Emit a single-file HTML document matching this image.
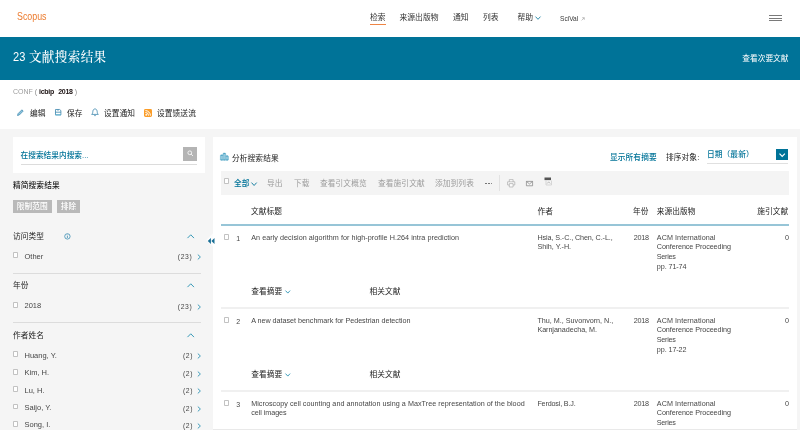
<!DOCTYPE html>
<html lang="zh-CN">
<head>
<meta charset="utf-8">
<title>Scopus - 文献搜索结果</title>
<style>
*{box-sizing:border-box;margin:0;padding:0}
html,body{width:800px;height:430px;overflow:hidden;background:#f5f5f5}
body{will-change:transform;position:relative;font-family:"Liberation Sans","Noto Sans CJK SC",sans-serif;font-size:7.2px;color:#464646;line-height:9.7px}
.a{position:absolute;white-space:nowrap}
.c{font-size:7.7px;line-height:10px;color:#1c1c1c;letter-spacing:0.1px}
.c.b{font-weight:500}
.b{color:#007398}
.g{color:#9c9c9c}
.w{color:#fff}
.cb{position:absolute;width:4.8px;height:5.7px;border:0.65px solid #c2c2c2;background:#fff;border-radius:0.9px}
.hr{position:absolute;height:1px;background:#dcdcdc}
.box{position:absolute}
svg{position:absolute;overflow:visible}
</style>
</head>
<body>
<div class="box" style="left:0px;top:0px;width:800px;height:37px;background:#fff;"></div>
<div class="a " style="left:17px;top:10.9px;color:#ec7a2c;font-size:10.1px;line-height:12px;transform:scaleX(0.875);transform-origin:0 50%">Scopus</div>
<div class="a " style="left:370px;top:13px;font-size:7.8px;line-height:10px;color:#323232">检索</div>
<div class="box" style="left:370px;top:23.6px;width:15.5px;height:1px;background:#ee8545;"></div>
<div class="a " style="left:399.5px;top:13px;font-size:7.8px;line-height:10px;color:#323232">来源出版物</div>
<div class="a " style="left:453px;top:13px;font-size:7.8px;line-height:10px;color:#323232">通知</div>
<div class="a " style="left:483px;top:13px;font-size:7.8px;line-height:10px;color:#323232">列表</div>
<div class="a " style="left:517.5px;top:13px;font-size:7.8px;line-height:10px;color:#323232">帮助</div>
<svg style="left:535px;top:16.4px" width="6" height="4" viewBox="0 0 6 4"><path d="M0.5 0.6 L3.0 3.3 L5.5 0.6" fill="none" stroke="#007398" stroke-width="0.8"/></svg>
<div class="a " style="left:560px;top:13.5px;font-size:6.6px;line-height:9px;color:#3a3a3a">SciVal</div>
<svg style="left:581px;top:16.5px" width="4" height="4" viewBox="0 0 4 4"><path d="M0.6 3.4 L3.2 0.8 M1.2 0.7 H3.3 V2.8" fill="none" stroke="#9a9a9a" stroke-width="0.6"/></svg>
<div class="box" style="left:769px;top:15.3px;width:13px;height:1px;background:#7a7a7a;"></div>
<div class="box" style="left:769px;top:17.8px;width:13px;height:1px;background:#7a7a7a;"></div>
<div class="box" style="left:769px;top:20.3px;width:13px;height:1px;background:#7a7a7a;"></div>
<div class="box" style="left:0px;top:37px;width:800px;height:43px;background:#007398;"></div>
<div class="a w" style="left:13px;top:49px;font-size:12.6px;line-height:16px;font-family:'Liberation Sans','Noto Serif CJK SC',serif"><span style="display:inline-block;font-size:13px;line-height:16px;transform:scaleX(0.85);transform-origin:0 50%;width:12.3px;vertical-align:top">23</span><span style="display:inline-block;width:3.6px"></span><span style="letter-spacing:0.35px;font-weight:500">文献搜索结果</span></div>
<div class="a w" style="right:11.5px;top:54px;font-size:7.7px;line-height:10px">查看次要文献</div>
<div class="box" style="left:0px;top:80px;width:800px;height:49.3px;background:#fff;"></div>
<div class="a " style="left:13px;top:86.7px;font-size:7px;line-height:10px"><span class="g">CONF</span> <span class="g" style="color:#8a8a8a">(</span> <span style="color:#1a1010;font-weight:bold;letter-spacing:-0.28px">icbip<span style="display:inline-block;width:4.2px"></span>2018</span> <span style="color:#8a8a8a">)</span></div>
<svg style="left:17.3px;top:109.2px" width="7" height="7" viewBox="0 0 7 7"><path d="M0.5 6.5 L1 4.7 L4.9 0.8 L6.2 2.1 L2.3 6 Z" fill="#8cc3dc" stroke="#3a85ac" stroke-width="0.7" stroke-linejoin="round"/></svg>
<div class="a c" style="left:30px;top:108.8px;">编辑</div>
<svg style="left:54.9px;top:109.3px" width="6.4" height="6.4" viewBox="0 0 6.4 6.4"><path d="M0.5 0.5 H4.6 L5.9 1.6 V5.9 H0.5 Z M0.5 3.2 H5.9 M3 0.5 V1.8" fill="#fff" stroke="#3a85ac" stroke-width="0.8"/><path d="M0.5 5.9 H5.9" stroke="#5bb5d5" stroke-width="0.9"/></svg>
<div class="a c" style="left:67px;top:108.8px;">保存</div>
<svg style="left:91px;top:108.3px" width="8" height="9" viewBox="0 0 8 9"><path d="M0.7 6.4 C1.9 5.4 1.7 4 1.9 3 C2.2 1.5 3.2 0.9 4 0.9 C4.8 0.9 5.8 1.5 6.1 3 C6.3 4 6.1 5.4 7.3 6.4 Z M3.2 7.6 H4.8" fill="none" stroke="#3a85ac" stroke-width="0.8"/></svg>
<div class="a c" style="left:104px;top:108.8px;">设置通知</div>
<svg style="left:144px;top:108.8px" width="8" height="8" viewBox="0 0 8 8"><rect x="0" y="0" width="8" height="8" rx="1.4" fill="#fb9d28"/><circle cx="2.2" cy="5.8" r="0.9" fill="#fff"/><path d="M1.4 3.5 A3.1 3.1 0 0 1 4.5 6.6 M1.4 1.6 A5 5 0 0 1 6.4 6.6" fill="none" stroke="#fff" stroke-width="1"/></svg>
<div class="a c" style="left:157px;top:108.8px;">设置馈送流</div>
<div class="box" style="left:13px;top:137px;width:192.3px;height:35.6px;background:#fff;"></div>
<div class="a b" style="left:20.5px;top:151.2px;font-size:7.7px;line-height:10px;font-weight:500">在搜索结果内搜索...</div>
<div class="box" style="left:183px;top:147px;width:14.1px;height:14.3px;background:#b4b4b4;"></div>
<svg style="left:186.5px;top:150.1px" width="7.2" height="7.2" viewBox="0 0 8 8"><circle cx="3.1" cy="3.1" r="2.1" fill="none" stroke="#fff" stroke-width="0.9"/><path d="M4.7 4.7 L6.6 6.6" stroke="#fff" stroke-width="1"/></svg>
<div class="box" style="left:20.5px;top:164px;width:176.6px;height:1px;background:#dcdcdc;"></div>
<div class="a c" style="left:13px;top:181px;font-weight:500">精简搜索结果</div>
<div class="a " style="left:13px;top:199.6px;background:#b9b9b9;color:#fff;height:13.2px;line-height:13.2px;text-align:center;font-size:7.7px;font-weight:500;letter-spacing:0.05px;width:38.7px">限制范围</div>
<div class="a " style="left:57px;top:199.6px;background:#b9b9b9;color:#fff;height:13.2px;line-height:13.2px;text-align:center;font-size:7.7px;font-weight:500;letter-spacing:0.05px;width:23px">排除</div>
<div class="a c" style="left:13px;top:231.5px;">访问类型</div>
<svg style="left:187.2px;top:233.7px" width="7.5" height="4.6" viewBox="0 0 7.5 4.6"><path d="M0.5 4.1 L3.75 0.8 L7.0 4.1" fill="none" stroke="#2b93b3" stroke-width="0.95"/></svg>
<svg style="left:63.7px;top:233px" width="7" height="7" viewBox="0 0 7 7"><circle cx="3.4" cy="3.4" r="2.7" fill="none" stroke="#3a8db3" stroke-width="0.8"/><path d="M3.4 2.9 V5 M3.4 1.7 V2.3" stroke="#3a8db3" stroke-width="0.8"/></svg>
<div class="cb" style="left:13.2px;top:252.3px"></div>
<div class="a " style="left:24.5px;top:251.5px;font-size:7.5px;line-height:10px">Other</div>
<div class="a " style="right:607.3px;top:252.3px;font-size:8.1px;line-height:10px;letter-spacing:0.75px;transform:scaleX(0.84);transform-origin:100% 50%">(23)</div>
<svg style="left:197px;top:254.2px" width="4.5" height="6" viewBox="0 0 4.5 6"><path d="M0.8 0.6 L3.4 3 L0.8 5.4" fill="none" stroke="#2b93b3" stroke-width="0.9"/></svg>
<div class="box" style="left:13px;top:272.8px;width:188px;height:1px;background:#dcdcdc;"></div>
<div class="a c" style="left:13px;top:280.7px;">年份</div>
<svg style="left:187.2px;top:282.9px" width="7.5" height="4.6" viewBox="0 0 7.5 4.6"><path d="M0.5 4.1 L3.75 0.8 L7.0 4.1" fill="none" stroke="#2b93b3" stroke-width="0.95"/></svg>
<div class="cb" style="left:13.2px;top:302.1px"></div>
<div class="a " style="left:24.5px;top:301.3px;font-size:7.5px;line-height:10px">2018</div>
<div class="a " style="right:607.3px;top:302.1px;font-size:8.1px;line-height:10px;letter-spacing:0.75px;transform:scaleX(0.84);transform-origin:100% 50%">(23)</div>
<svg style="left:197px;top:304.0px" width="4.5" height="6" viewBox="0 0 4.5 6"><path d="M0.8 0.6 L3.4 3 L0.8 5.4" fill="none" stroke="#2b93b3" stroke-width="0.9"/></svg>
<div class="box" style="left:13px;top:321.8px;width:188px;height:1px;background:#dcdcdc;"></div>
<div class="a c" style="left:13px;top:331px;">作者姓名</div>
<svg style="left:187.2px;top:333.2px" width="7.5" height="4.6" viewBox="0 0 7.5 4.6"><path d="M0.5 4.1 L3.75 0.8 L7.0 4.1" fill="none" stroke="#2b93b3" stroke-width="0.95"/></svg>
<div class="cb" style="left:13.2px;top:351.40000000000003px"></div>
<div class="a " style="left:24.5px;top:350.6px;font-size:7.5px;line-height:10px">Huang, Y.</div>
<div class="a " style="right:607.3px;top:351.40000000000003px;font-size:8.1px;line-height:10px;letter-spacing:0.75px;transform:scaleX(0.84);transform-origin:100% 50%">(2)</div>
<svg style="left:197px;top:353.3px" width="4.5" height="6" viewBox="0 0 4.5 6"><path d="M0.8 0.6 L3.4 3 L0.8 5.4" fill="none" stroke="#2b93b3" stroke-width="0.9"/></svg>
<div class="cb" style="left:13.2px;top:368.85px"></div>
<div class="a " style="left:24.5px;top:368.05px;font-size:7.5px;line-height:10px">Kim, H.</div>
<div class="a " style="right:607.3px;top:368.85px;font-size:8.1px;line-height:10px;letter-spacing:0.75px;transform:scaleX(0.84);transform-origin:100% 50%">(2)</div>
<svg style="left:197px;top:370.75px" width="4.5" height="6" viewBox="0 0 4.5 6"><path d="M0.8 0.6 L3.4 3 L0.8 5.4" fill="none" stroke="#2b93b3" stroke-width="0.9"/></svg>
<div class="cb" style="left:13.2px;top:386.3px"></div>
<div class="a " style="left:24.5px;top:385.5px;font-size:7.5px;line-height:10px">Lu, H.</div>
<div class="a " style="right:607.3px;top:386.3px;font-size:8.1px;line-height:10px;letter-spacing:0.75px;transform:scaleX(0.84);transform-origin:100% 50%">(2)</div>
<svg style="left:197px;top:388.2px" width="4.5" height="6" viewBox="0 0 4.5 6"><path d="M0.8 0.6 L3.4 3 L0.8 5.4" fill="none" stroke="#2b93b3" stroke-width="0.9"/></svg>
<div class="cb" style="left:13.2px;top:403.75000000000006px"></div>
<div class="a " style="left:24.5px;top:402.95000000000005px;font-size:7.5px;line-height:10px">Saijo, Y.</div>
<div class="a " style="right:607.3px;top:403.75000000000006px;font-size:8.1px;line-height:10px;letter-spacing:0.75px;transform:scaleX(0.84);transform-origin:100% 50%">(2)</div>
<svg style="left:197px;top:405.65000000000003px" width="4.5" height="6" viewBox="0 0 4.5 6"><path d="M0.8 0.6 L3.4 3 L0.8 5.4" fill="none" stroke="#2b93b3" stroke-width="0.9"/></svg>
<div class="cb" style="left:13.2px;top:421.20000000000005px"></div>
<div class="a " style="left:24.5px;top:420.40000000000003px;font-size:7.5px;line-height:10px">Song, I.</div>
<div class="a " style="right:607.3px;top:421.20000000000005px;font-size:8.1px;line-height:10px;letter-spacing:0.75px;transform:scaleX(0.84);transform-origin:100% 50%">(2)</div>
<svg style="left:197px;top:423.1px" width="4.5" height="6" viewBox="0 0 4.5 6"><path d="M0.8 0.6 L3.4 3 L0.8 5.4" fill="none" stroke="#2b93b3" stroke-width="0.9"/></svg>
<div class="box" style="left:212.6px;top:136.8px;width:584.8px;height:293.2px;background:#fff;"></div>
<div class="box" style="left:212.6px;top:429px;width:584.8px;height:1px;background:#e9e9e9;"></div>
<svg style="left:205.6px;top:232.5px" width="7.2" height="15" viewBox="0 0 7.2 15"><path d="M7.2 0 L0.3 7 L7.2 14 Z" fill="#fcfcfc"/></svg>
<svg style="left:207px;top:237.3px" width="8" height="8" viewBox="0 0 8 8"><path d="M3.9 0.9 L0.8 4 L3.9 7.1 Z M7.5 0.9 L4.4 4 L7.5 7.1 Z" fill="#1a6f96"/></svg>
<svg style="left:220.2px;top:152.8px" width="9" height="7.4" viewBox="0 0 9 7.4"><path d="M0.4 6.9 V2.6 Q0.4 2.1 0.9 2.1 H2.5 Q3 2.1 3 2.6 V0.8 Q3 0.3 3.5 0.3 H5.2 Q5.7 0.3 5.7 0.8 V3.4 Q5.7 2.9 6.2 2.9 H7.9 Q8.4 2.9 8.4 3.4 V6.9 Q8.4 7.1 7.9 7.1 H0.9 Q0.4 7.1 0.4 6.9 Z" fill="#93c9de" stroke="#4aa3c6" stroke-width="0.5"/><path d="M3 2.6 V7 M5.7 3.4 V7" stroke="#6fb6d2" stroke-width="0.4"/><path d="M1.2 2.2 H2.2 M3.9 0.4 H4.9 M6.6 3 H7.6 M1.2 7 H2.2 M3.9 7 H4.9 M6.6 7 H7.6" stroke="#2f93ba" stroke-width="0.7" stroke-linecap="round"/></svg>
<div class="a c" style="left:232px;top:153.5px;">分析搜索结果</div>
<div class="a c b" style="left:610px;top:152.6px;">显示所有摘要</div>
<div class="a c" style="left:666px;top:152.6px;">排序对象:</div>
<div class="a c b" style="left:707px;top:149.8px;letter-spacing:0.1px;font-weight:500">日期（最新）</div>
<div class="box" style="left:707px;top:163px;width:80.9px;height:1px;background:#e0e0e0;"></div>
<div class="box" style="left:776px;top:148.8px;width:11.9px;height:11.2px;background:#007398;"></div>
<svg style="left:778.7px;top:152.7px" width="6.4" height="4.2" viewBox="0 0 6.4 4.2"><path d="M0.5 0.6 L3.2 3.5 L5.9 0.6" fill="none" stroke="#fff" stroke-width="1.15"/></svg>
<div class="box" style="left:220.5px;top:170.8px;width:568.5px;height:24.5px;background:#f4f4f4;"></div>
<div class="cb" style="left:224.2px;top:178.2px"></div>
<div class="a c b" style="left:234px;top:178.7px;">全部</div>
<svg style="left:251.2px;top:181.6px" width="6.2" height="4.2" viewBox="0 0 6.2 4.2"><path d="M0.5 0.6 L3.1 3.5 L5.7 0.6" fill="none" stroke="#007398" stroke-width="0.9"/></svg>
<div class="a c g" style="left:267px;top:178.7px;">导出</div>
<div class="a c g" style="left:294px;top:178.7px;">下载</div>
<div class="a c g" style="left:320px;top:178.7px;">查看引文概览</div>
<div class="a c g" style="left:378px;top:178.7px;">查看施引文献</div>
<div class="a c g" style="left:435px;top:178.7px;">添加到列表</div>
<div class="box" style="left:485.3px;top:183px;width:1.4px;height:1.4px;background:#666;border-radius:50%"></div>
<div class="box" style="left:488.2px;top:183px;width:1.4px;height:1.4px;background:#666;border-radius:50%"></div>
<div class="box" style="left:491.1px;top:183px;width:1.4px;height:1.4px;background:#666;border-radius:50%"></div>
<div class="box" style="left:498.5px;top:174.5px;width:1px;height:16.5px;background:#e2e2e2;"></div>
<svg style="left:507.3px;top:178.6px" width="8.4" height="8.6" viewBox="0 0 8.4 8.6"><path d="M2.3 2.8 V0.6 H6.1 V2.8 M2.3 6 H0.6 V2.8 H7.8 V6 H6.1 M2.3 4.6 H6.1 V8 H2.3 Z" fill="#fbfbfb" stroke="#a5a5a5" stroke-width="0.65"/></svg>
<svg style="left:526px;top:180.6px" width="7" height="5.2" viewBox="0 0 7 5.2"><path d="M0.4 0.4 H6.6 V4.8 H0.4 Z M0.4 0.4 L3.5 3 L6.6 0.4" fill="none" stroke="#808080" stroke-width="0.7"/></svg>
<svg style="left:543.6px;top:176.6px" width="9" height="9" viewBox="0 0 9 9"><rect x="0.5" y="0.5" width="6.5" height="2.6" fill="#555"/><path d="M2 3.5 V8 H7.5 V3.5" fill="none" stroke="#c8c8c8" stroke-width="0.7"/><path d="M3.2 6.5 L4.7 4.8 L6.2 6.5" fill="none" stroke="#999" stroke-width="0.6"/></svg>
<div class="a c" style="left:251px;top:207px;">文献标题</div>
<div class="a c" style="left:537.5px;top:207px;">作者</div>
<div class="a c" style="left:633px;top:207px;">年份</div>
<div class="a c" style="left:656.7px;top:207px;">来源出版物</div>
<div class="a c" style="right:11.7px;top:207px;">施引文献</div>
<div class="box" style="left:220.5px;top:224.3px;width:568.5px;height:1.3px;background:#97c5d7;"></div>
<div class="cb" style="left:224.2px;top:234.1px"></div>
<div class="a " style="left:236.3px;top:233.7px;font-size:7px">1</div>
<div class="a " style="left:251.2px;top:232.7px;letter-spacing:0.05px">An early decision algorithm for high-profile H.264 intra prediction</div>
<div class="a " style="left:537.4px;top:232.7px;letter-spacing:-0.09px">Hsia, S.-C., Chen, C.-L.,</div>
<div class="a " style="left:537.4px;top:242.39999999999998px;">Shih, Y.-H.</div>
<div class="a " style="left:633.7px;top:232.7px;letter-spacing:-0.2px">2018</div>
<div class="a " style="left:656.8px;top:232.7px;letter-spacing:0.07px">ACM International</div>
<div class="a " style="left:656.8px;top:242.39999999999998px;letter-spacing:-0.07px">Conference Proceeding</div>
<div class="a " style="left:656.8px;top:252.1px;letter-spacing:-0.25px">Series</div>
<div class="a " style="left:656.8px;top:261.8px;letter-spacing:-0.08px">pp. 71-74</div>
<div class="a " style="right:11px;top:232.7px;">0</div>
<div class="a c" style="left:251.2px;top:287.0px;">查看摘要</div>
<svg style="left:285.3px;top:290.3px" width="5.6" height="3.8" viewBox="0 0 5.6 3.8"><path d="M0.5 0.6 L2.8 3.0999999999999996 L5.1 0.6" fill="none" stroke="#2b93b3" stroke-width="0.9"/></svg>
<div class="a c" style="left:369.5px;top:287.0px;">相关文献</div>
<div class="box" style="left:220.5px;top:307.4px;width:568.5px;height:1.9px;background:#f0f0f0;"></div>
<div class="cb" style="left:224.2px;top:317.09999999999997px"></div>
<div class="a " style="left:236.3px;top:316.7px;font-size:7px">2</div>
<div class="a " style="left:251.2px;top:315.7px;letter-spacing:-0.03px">A new dataset benchmark for Pedestrian detection</div>
<div class="a " style="left:537.4px;top:315.7px;">Thu, M., Suvonvorn, N.,</div>
<div class="a " style="left:537.4px;top:325.4px;letter-spacing:-0.05px">Karnjanadecha, M.</div>
<div class="a " style="left:633.7px;top:315.7px;letter-spacing:-0.2px">2018</div>
<div class="a " style="left:656.8px;top:315.7px;letter-spacing:0.07px">ACM International</div>
<div class="a " style="left:656.8px;top:325.4px;letter-spacing:-0.07px">Conference Proceeding</div>
<div class="a " style="left:656.8px;top:335.09999999999997px;letter-spacing:-0.25px">Series</div>
<div class="a " style="left:656.8px;top:344.8px;letter-spacing:-0.08px">pp. 17-22</div>
<div class="a " style="right:11px;top:315.7px;">0</div>
<div class="a c" style="left:251.2px;top:370.0px;">查看摘要</div>
<svg style="left:285.3px;top:373.3px" width="5.6" height="3.8" viewBox="0 0 5.6 3.8"><path d="M0.5 0.6 L2.8 3.0999999999999996 L5.1 0.6" fill="none" stroke="#2b93b3" stroke-width="0.9"/></svg>
<div class="a c" style="left:369.5px;top:370.0px;">相关文献</div>
<div class="box" style="left:220.5px;top:390.4px;width:568.5px;height:1.9px;background:#f0f0f0;"></div>
<div class="cb" style="left:224.2px;top:400.09999999999997px"></div>
<div class="a " style="left:236.3px;top:399.7px;font-size:7px">3</div>
<div class="a " style="left:251.2px;top:398.7px;letter-spacing:0.035px">Microscopy cell counting and annotation using a MaxTree representation of the blood</div>
<div class="a " style="left:251.2px;top:408.4px;letter-spacing:-0.05px">cell images</div>
<div class="a " style="left:537.4px;top:398.7px;letter-spacing:-0.17px">Ferdosi, B.J.</div>
<div class="a " style="left:633.7px;top:398.7px;letter-spacing:-0.2px">2018</div>
<div class="a " style="left:656.8px;top:398.7px;letter-spacing:0.07px">ACM International</div>
<div class="a " style="left:656.8px;top:408.4px;letter-spacing:-0.07px">Conference Proceeding</div>
<div class="a " style="left:656.8px;top:418.09999999999997px;letter-spacing:-0.25px">Series</div>
<div class="a " style="right:11px;top:398.7px;">0</div>
</body>
</html>
